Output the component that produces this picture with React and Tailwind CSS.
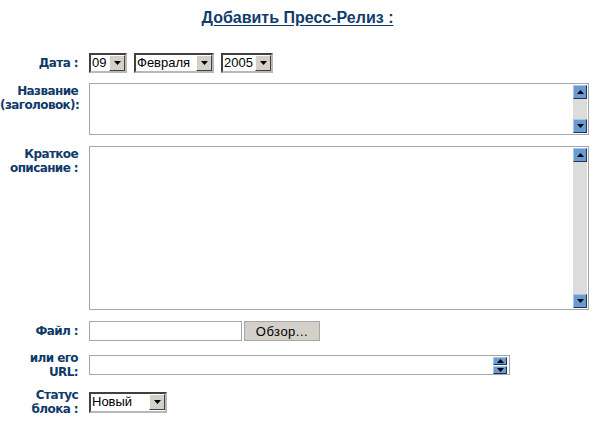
import { useState } from 'react'

const FONT = { fontFamily: '"Liberation Sans", Arial, sans-serif' }
const LABEL_FONT = { fontFamily: '"DejaVu Sans", Verdana, sans-serif' }

function Arrow({ up, color = '#000' }) {
  return (
    <svg width="7" height="4" viewBox="0 0 7 4">
      {up
        ? <path d="M3.5 0 L7 4 L0 4 Z" fill={color} />
        : <path d="M0 0 L7 0 L3.5 4 Z" fill={color} />}
    </svg>
  )
}

function Select({ width, value }) {
  return (
    <div className={`${width} h-[20px] flex bg-white border-2 border-t-[#404040] border-l-[#404040] border-r-[#b8b8b8] border-b-[#b8b8b8]`}>
      <div className="flex-1 px-[1px] text-[13px] leading-[16px] text-black">{value}</div>
      <div className="w-[16px] h-[16px] bg-[#d4d0c8] border border-t-white border-l-white border-r-[#404040] border-b-[#404040] flex items-center justify-center">
        <Arrow />
      </div>
    </div>
  )
}

function ScrollBtn({ up, small }) {
  return (
    <div className={`${small ? 'w-[14px] h-[8px]' : 'w-[14px] h-[14px]'} bg-[#6b9ad0] border border-t-[#a9c6e8] border-l-[#a9c6e8] border-r-[#1d3350] border-b-[#1d3350] flex items-center justify-center`}>
      <Arrow up={up} />
    </div>
  )
}

function Area({ height }) {
  const [val, setVal] = useState('')
  return (
    <div className={`w-[500px] ${height} border border-[#a3a7ab] bg-white flex`}>
      <textarea
        value={val}
        onChange={e => setVal(e.target.value)}
        className="flex-1 resize-none outline-none text-[13px] px-1"
      />
      <div className="w-[16px] flex flex-col p-[1px]">
        <ScrollBtn up />
        <div className="flex-1 bg-[#dcdcdc]" />
        <ScrollBtn />
      </div>
    </div>
  )
}

function Label({ children, className = '' }) {
  return (
    <div
      className={`w-[78px] shrink-0 text-right text-[12px] leading-[14px] font-bold tracking-[-0.6px] text-[#0f3a69] ${className}`}
      style={LABEL_FONT}
    >
      {children}
    </div>
  )
}

export default function App() {
  return (
    <div className="w-[595px] h-[424px] bg-white overflow-hidden" style={FONT}>
      <div className="pt-[8px] text-center leading-[20px]">
        <span className="text-[16px] leading-[20px] font-bold text-[#123c6b] underline underline-offset-2">
          Добавить Пресс-Релиз :
        </span>
      </div>

      {/* Дата */}
      <div className="flex items-center gap-[11px] mt-[25px]">
        <Label>Дата :</Label>
        <div className="flex gap-[7px]">
          <Select width="w-[38px]" value="09" />
          <Select width="w-[80px]" value="Февраля" />
          <Select width="w-[52px]" value="2005" />
        </div>
      </div>

      {/* Название */}
      <div className="flex items-start gap-[11px] mt-[10px]">
        <Label className="pt-[1px]">Название<br />(заголовок):</Label>
        <Area height="h-[52px]" />
      </div>

      {/* Краткое описание */}
      <div className="flex items-start gap-[11px] mt-[11px]">
        <Label className="pt-[1px]">Краткое<br />описание :</Label>
        <Area height="h-[164px]" />
      </div>

      {/* Файл */}
      <div className="flex items-center gap-[11px] mt-[11px]">
        <Label>Файл :</Label>
        <div className="flex gap-[2px]">
          <input className="w-[153px] h-[20px] border border-[#a3a7ab] outline-none text-[13px] px-1" />
          <button className="w-[76px] h-[20px] bg-[#d4d0c8] border border-[#a3a7ab] text-[13px] tracking-[0.5px] text-black">
            Обзор...
          </button>
        </div>
      </div>

      {/* URL */}
      <div className="flex items-center gap-[11px] mt-[10px]">
        <Label>или его<br />URL:</Label>
        <div className="w-[421px] h-[20px] border border-[#a3a7ab] bg-white flex">
          <input className="flex-1 outline-none text-[13px] px-1" />
          <div className="w-[16px] flex flex-col justify-center gap-[1px] pr-[2px]">
            <ScrollBtn up small />
            <ScrollBtn small />
          </div>
        </div>
      </div>

      {/* Статус */}
      <div className="flex items-center gap-[11px] mt-[9px]">
        <Label>Статус<br />блока :</Label>
        <Select width="w-[78px] h-[21px]" value="Новый" />
      </div>
    </div>
  )
}
